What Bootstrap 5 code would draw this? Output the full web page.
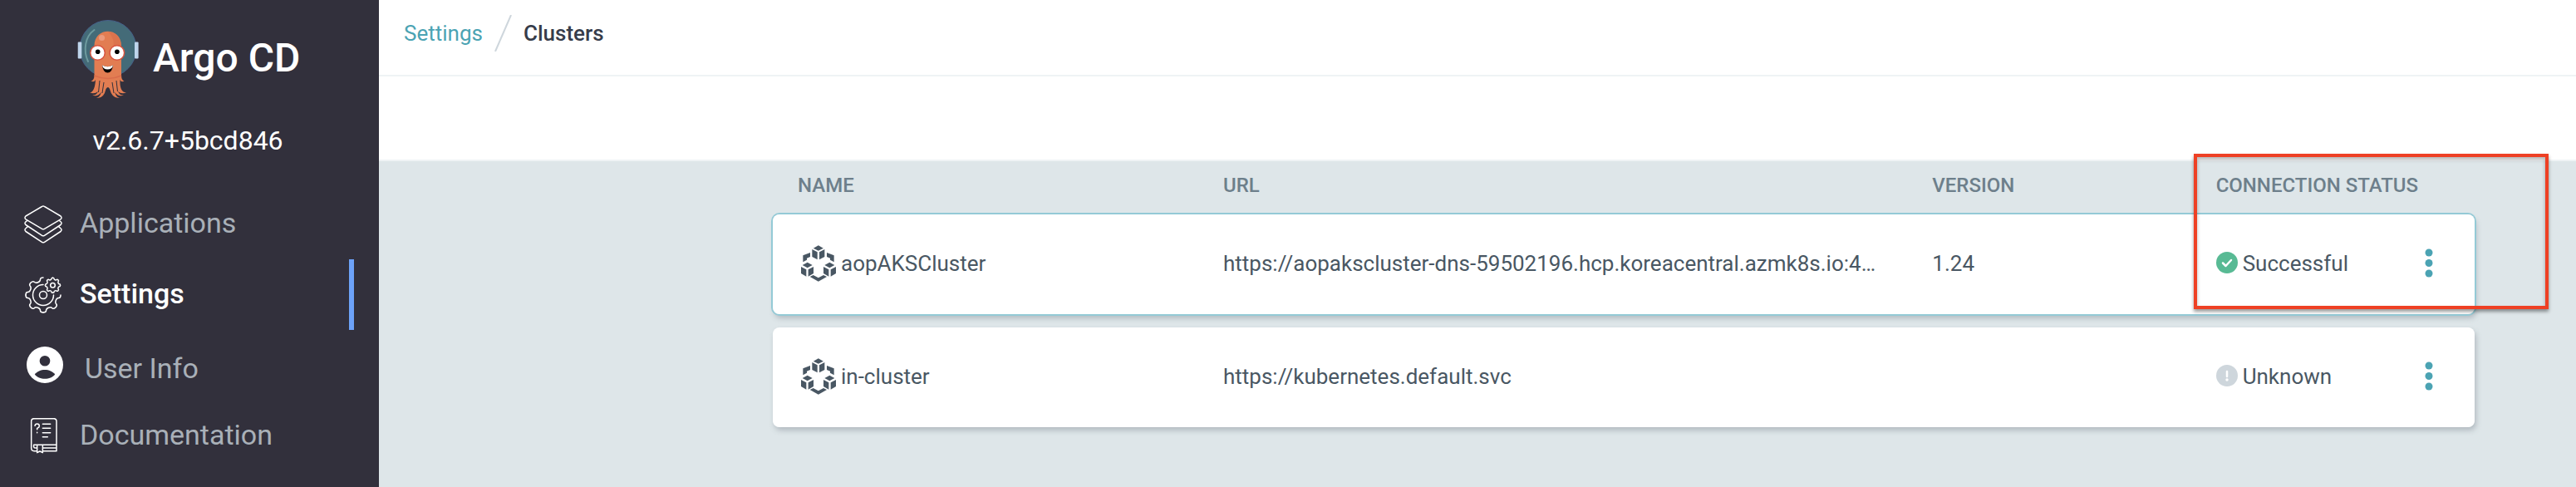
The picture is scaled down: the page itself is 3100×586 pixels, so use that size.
<!DOCTYPE html>
<html lang="en">
<head>
<meta charset="utf-8">
<meta name="viewport" content="width=device-width, initial-scale=1">
<title>Clusters - Argo CD</title>
<link href="https://cdn.jsdelivr.net/npm/bootstrap@5.3.0/dist/css/bootstrap.min.css" rel="stylesheet">
<style>
  body { font-family: Roboto, "Liberation Sans", sans-serif; font-size: 26px; line-height: 32px; color: #495763; background: #dee6e9; }
  .sidebar { width: 456px; background: #32303c; }
  .brand-row { padding: 15px 0 0 80px; }
  .brand-name { font-size: 48px; line-height: 56px; font-weight: 500; margin-left: 4px; }
  .brand-version { font-size: 32px; line-height: 40px; margin: 24px 4px 38px 0; }
  .side-link { height: 85px; width: 426px; padding-left: 29px; gap: 21px; color: #a9b0b8; font-size: 34px; line-height: 40px; text-decoration: none; }
  .side-link:hover { color: #fff; }
  .side-link.current { color: #fff; font-weight: 500; border-right: 6px solid #6da2f8; }
  .side-icon { width: 46px; color: #fff; }
  .side-icon.wide { width: 50px; }
  .side-label { padding-bottom: 3px; }
  .side-label.low { padding: 6px 0 0 2px; }
  .topbar { height: 92px; padding: 0 30px 10px; border-bottom: 2px solid #eff3f5; gap: 14px; }
  .topbar a { color: #4ba3b3; text-decoration: none; }
  .topbar .here { color: #363c4a; font-weight: 500; }
  .toolbar { height: 102px; border-bottom: 2px solid #eff3f5; }
  .content-area { padding: 0 122px 56px 474px; }
  .cluster-table { table-layout: fixed; border-collapse: separate; border-spacing: 0 16px; }
  .cluster-table th { height: 32px; padding: 0 30px; font-size: 24px; line-height: 26px; font-weight: 500; color: #6d7f8b; vertical-align: top; white-space: nowrap; }
  .cluster-table td { height: 120px; padding: 0 30px 2px; background: #fff; vertical-align: middle; }
  .cluster-table td:first-child { border-radius: 8px 0 0 8px; }
  .cluster-table td:last-child { border-radius: 0 8px 8px 0; }
  .cluster-table tbody tr { border-radius: 8px; box-shadow: 2px 4px 6px rgba(100, 110, 120, .35); }
  .cluster-table tbody tr.hovered { box-shadow: 0 0 0 2px #94cad6, 2px 5px 6px rgba(100, 110, 120, .35); }
  .cluster-name { gap: 2px; }
  .status-icon { margin-right: 6px; }
  .menu-btn { width: 50px; height: 50px; color: #4ba3b3; }
  .callout { position: absolute; top: 185px; right: 33px; width: 427px; height: 187px; border: 4px solid #ee4024; box-shadow: 0 3px 4px rgba(0, 0, 0, .4), inset 0 3px 4px rgba(0, 0, 0, .3); pointer-events: none; }
</style>
</head>
<body>
<svg class="d-none" aria-hidden="true">
  <symbol id="cluster" viewBox="60 48 150 138">
    <path fill="currentColor" d="M134.500 52l18 10-18 9-18-9zM112 66l19 10v27l-19-10zM157 66l-19 10v27l19-10zM95 113l18 10-18 10-18-10zM72 129l19 10v25l-19-11zM117 129l-19 10v25l19-11zM175 113l18 10-18 10-18-10zM153 129l19 10v25l-19-11zM198 129l-19 10v25l19-11zM79 88l26-10v15l-12 5v6l-14 8zM191 88l-26-10v15l12 5v6l14 8zM104 165l12-6 18.500 10 18.500-10 12 6-30.500 17z"/>
  </symbol>
  <symbol id="dots" viewBox="0 0 10 36"><circle cx="5" cy="5" r="4.500"/><circle cx="5" cy="17.500" r="4.500"/><circle cx="5" cy="30" r="4.500"/></symbol>
  <path id="gear-quarter" d="M0-21Q-3.500-21-3.500-18.800Q-3.400-16.500-6.300-15.300Q-9.300-14.100-10.800-15.700Q-12.400-17.300-14.900-14.900Q-17.300-12.400-15.700-10.800Q-14.100-9.300-15.300-6.300Q-16.500-3.400-18.800-3.500Q-21-3.500-21 0"/>
</svg>

<div class="d-flex min-vh-100">
  <nav class="sidebar flex-shrink-0 text-white" aria-label="Main">
    <div class="brand-row d-flex align-items-center">
      <svg class="flex-shrink-0" width="100" height="110" viewBox="0 0 100 110" role="img" aria-label="Argo logo">
        <circle cx="50" cy="43.500" r="34" fill="#446b78" stroke="#46618a" stroke-width="1"/>
        <rect x="13.700" y="35.500" width="4.600" height="20" rx="1" fill="#bfd5ec"/>
        <rect x="82" y="35.500" width="4.600" height="20" rx="1" fill="#bfd5ec"/>
        <path d="M33.500 21C22 29 20 46 26 59" fill="none" stroke="#6d9a9e" stroke-width="2" stroke-linecap="round"/>
        <path fill="#e27d52" d="M33.500 40C33.500 17 66 17 66 40V75Q66 82 69.500 82.500Q66 84.500 64.500 81C64 90 66 96 72 96.500Q66 98.500 62 95Q64 100 69 99.500Q63 102 58 96Q60 102 64 103Q55 104 52 92Q50 88 47.500 92Q45 104 36 103Q40 102 42 96Q37 102 31 99.500Q36 100 38 95Q34 98.500 28 96.500Q34 96 35 81Q33.500 84.500 29.500 82.500Q33.500 82 33.500 75Z"/>
        <path d="M50 23Q59 31 56 45H66V40Q64 24 50 23Z" fill="#d96c4b" opacity=".6"/>
        <path d="M33.500 76Q50 83 66 76" fill="none" stroke="#d96c4b" stroke-width="1.500"/>
        <path stroke="#32303c" stroke-width="1" fill="none" d="M40 82L38.500 96M45 84L43 97M55 84L57 97M60 82L61.500 95"/>
        <circle cx="42.500" cy="30.500" r="3.600" fill="#eb9a7c"/>
        <g fill="#fff" stroke="#d8533f" stroke-width="1.500"><circle cx="37.500" cy="48.500" r="8.800"/><circle cx="60.800" cy="48.500" r="8.800"/></g>
        <circle cx="37.700" cy="47.200" r="2.800"/><circle cx="60.900" cy="47.200" r="2.800"/>
        <path d="M43 63.500Q49.500 67 56 63.500Q55 72.500 49.500 72.500Q44 72.500 43 63.500Z"/>
        <path fill="#fff" d="M43 63.500Q49.500 67 56 63.500Q55 68.500 49.500 68.500Q44 68.500 43 63.500Z"/>
      </svg>
      <span class="brand-name text-nowrap">Argo CD</span>
    </div>
    <div class="brand-version text-center">v2.6.7+5bcd846</div>

    <a class="side-link d-flex align-items-center" href="#applications">
      <span class="side-icon d-flex justify-content-center">
        <svg width="46" height="46" viewBox="0 0 46 46" fill="none" stroke="currentColor" stroke-width="1.500" stroke-linejoin="round" aria-hidden="true">
          <path d="M21.500 1.500Q23 .5 24.500 1.500L44 13Q46 15 44 16.800L24.500 28.300Q23 29.300 21.500 28.300L2 16.800Q0 15 2 13ZM4.200 18L2 19.800Q0 21.500 2 23.500L21.500 36.300Q23 37.300 24.500 36.300L44 23.500Q46 21.500 44 19.800L41.800 18M4.200 25.800L2 27.800Q0 29.500 2 31.500L21.500 44.300Q23 45.300 24.500 44.300L44 31.500Q46 29.500 44 27.800L41.800 25.800"/>
        </svg>
      </span>
      <span class="side-label">Applications</span>
    </a>
    <a class="side-link current d-flex align-items-center" href="#settings" aria-current="page">
      <span class="side-icon d-flex justify-content-center">
        <svg width="46" height="46" viewBox="-23 -23 46 46" fill="none" stroke="currentColor" stroke-width="1.500" stroke-linecap="round" aria-hidden="true">
          <use href="#gear-quarter"/><use href="#gear-quarter" transform="rotate(-90)"/><use href="#gear-quarter" transform="rotate(180)"/>
          <circle r="4.500"/>
          <path d="M0-12.500A12.500 12.500 0 1 0 12.500 0"/>
          <g transform="translate(11.500 -11.700) scale(.43)" stroke-width="3.500">
            <use href="#gear-quarter"/><use href="#gear-quarter" transform="rotate(-90)"/><use href="#gear-quarter" transform="rotate(180)"/><use href="#gear-quarter" transform="rotate(90)"/>
            <circle r="6.500"/>
          </g>
        </svg>
      </span>
      <span class="side-label">Settings</span>
    </a>
    <a class="side-link d-flex align-items-center" href="#user-info">
      <span class="side-icon wide d-flex justify-content-center">
        <svg width="44" height="46" viewBox="0 0 44 46" aria-hidden="true">
          <circle cx="22" cy="22" r="22" fill="currentColor"/>
          <circle cx="22" cy="17.300" r="6.300" fill="#32303c"/>
          <path fill="#32303c" d="M9.800 33.500C15 26 29 26 34.200 33.500C29 40.500 15 40.500 9.800 33.500Z"/>
        </svg>
      </span>
      <span class="side-label low">User Info</span>
    </a>
    <a class="side-link d-flex align-items-center" href="#documentation">
      <span class="side-icon d-flex justify-content-center">
        <svg width="34" height="44" viewBox="105 644 102 132" fill="none" stroke="currentColor" stroke-width="4.500" stroke-linecap="round" stroke-linejoin="round" aria-hidden="true">
          <path d="M133 763H123Q113 763 113 753V656Q113 646 123 646H194Q204 646 204 656V763H156M122 741H204M122 741Q120 752 128 752H133M156 752H204M134 742V769L144 764L154 769V742"/>
          <path d="M154 666H182M154 681H182M154 697H182M154 712H172M126 672Q127 665 134 665Q142 665 142 673Q142 678 134 681V685M134 696V697"/>
        </svg>
      </span>
      <span class="side-label">Documentation</span>
    </a>
  </nav>

  <main class="flex-grow-1 position-relative" style="min-width:0">
    <header class="topbar bg-white d-flex align-items-center" aria-label="Breadcrumb">
      <a href="#settings">Settings</a>
      <svg width="21" height="44" viewBox="0 0 21 44" aria-hidden="true"><path d="M1 44L20 0" stroke="#ced6dc" stroke-width="2"/></svg>
      <span class="here" aria-current="page">Clusters</span>
    </header>
    <div class="toolbar bg-white"></div>
    <div class="content-area">
      <table class="cluster-table w-100">
        <colgroup><col style="width:25%"><col style="width:41.6667%"><col style="width:16.6667%"><col style="width:16.6667%"></colgroup>
        <thead>
          <tr><th scope="col">NAME</th><th scope="col">URL</th><th scope="col">VERSION</th><th scope="col">CONNECTION STATUS</th></tr>
        </thead>
        <tbody>
          <tr class="hovered">
            <td><div class="cluster-name d-flex align-items-center"><svg width="50" height="46" aria-hidden="true"><use href="#cluster"/></svg><span>aopAKSCluster</span></div></td>
            <td class="text-truncate">https://aopakscluster-dns-59502196.hcp.koreacentral.azmk8s.io:443</td>
            <td>1.24</td>
            <td>
              <div class="d-flex align-items-center">
                <svg class="status-icon" width="26" height="28" viewBox="0 0 26 28" aria-hidden="true"><circle cx="13" cy="13" r="13" fill="#58ba94"/><path d="M8 13.500l3.500 3.500 6.500-7" fill="none" stroke="#fff" stroke-width="2.500" stroke-linecap="round" stroke-linejoin="round"/></svg>
                <span>Successful</span>
                <button type="button" class="menu-btn btn border-0 p-0 ms-auto" aria-label="Actions for aopAKSCluster"><svg width="10" height="36" fill="currentColor" class="d-block mx-auto"><use href="#dots"/></svg></button>
              </div>
            </td>
          </tr>
          <tr>
            <td><div class="cluster-name d-flex align-items-center"><svg width="50" height="46" aria-hidden="true"><use href="#cluster"/></svg><span>in-cluster</span></div></td>
            <td class="text-truncate">https://kubernetes.default.svc</td>
            <td></td>
            <td>
              <div class="d-flex align-items-center">
                <svg class="status-icon" width="26" height="28" viewBox="0 0 26 28" aria-hidden="true"><circle cx="13" cy="13" r="13" fill="#ced6dc"/><path d="M13 8v6" stroke="#fff" stroke-width="2.500" stroke-linecap="round"/><circle cx="13" cy="18" r="1.700" fill="#fff"/></svg>
                <span>Unknown</span>
                <button type="button" class="menu-btn btn border-0 p-0 ms-auto" aria-label="Actions for in-cluster"><svg width="10" height="36" fill="currentColor" class="d-block mx-auto"><use href="#dots"/></svg></button>
              </div>
            </td>
          </tr>
        </tbody>
      </table>
    </div>
    <div class="callout"></div>
  </main>
</div>
<script src="https://cdn.jsdelivr.net/npm/bootstrap@5.3.0/dist/js/bootstrap.bundle.min.js"></script>
</body>
</html>
